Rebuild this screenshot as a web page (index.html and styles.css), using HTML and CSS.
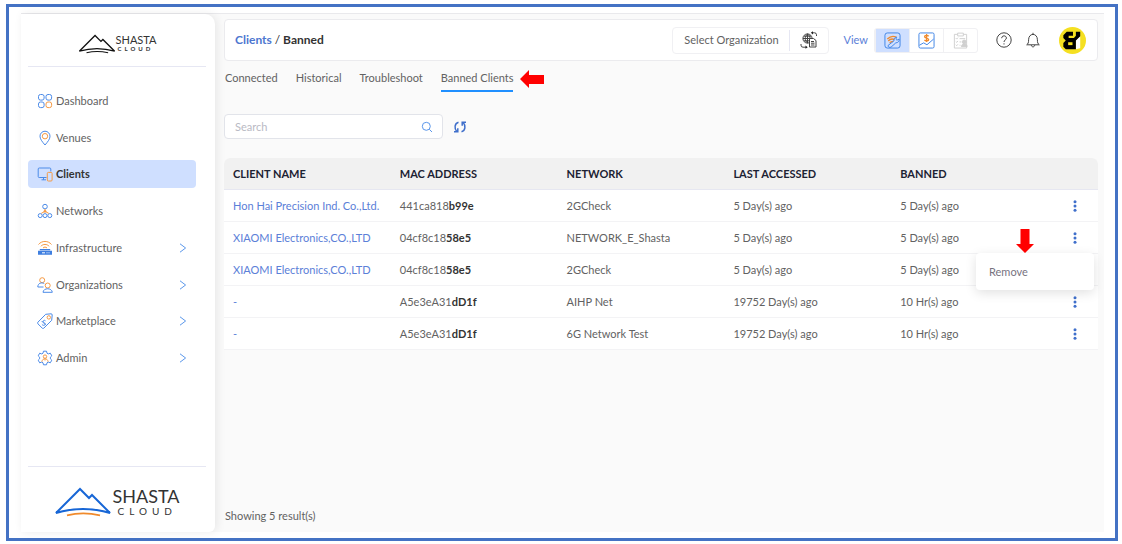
FILE: index.html
```html
<!DOCTYPE html>
<html lang="en">
<head>
<meta charset="utf-8">
<meta name="viewport" content="width=device-width, initial-scale=1">
<title>Clients / Banned – Shasta Cloud</title>
<link rel="stylesheet" href="styles.css">
</head>
<body>
<svg class="defs" aria-hidden="true">
  <symbol id="chevron" viewBox="0 0 8 10"><path d="M1 .8 6.6 5 1 9.2"/></symbol>
  <symbol id="dots" viewBox="0 0 4 12"><circle cx="2" cy="1.7" r="1.5"/><circle cx="2" cy="6" r="1.5"/><circle cx="2" cy="10.3" r="1.5"/></symbol>
</svg>
<div class="frame">
<div class="app">
  <aside class="sidebar">
    <a class="logo logo-small" href="#">
      <svg class="mountain" viewBox="0 0 58 30" aria-hidden="true"><path class="peak" d="M2 26 26 2l9 9 3-3 18 18Q29 18 2 26z"/><path class="arc" d="M13 28.300Q29 24.500 46 28.300"/></svg>
      <span class="logo-text"><span class="logo-name">SHASTA</span><span class="logo-sub">CLOUD</span></span>
    </a>
    <nav class="menu">
      <a class="item" href="#"><svg class="icon" viewBox="0 0 16 16" aria-hidden="true"><rect x="1.500" y="1.500" width="5.600" height="5.600" rx="2"/><rect x="9" y="1.500" width="5.600" height="5.600" rx="2"/><rect x="1.500" y="9" width="5.600" height="5.600" rx="2"/><rect class="o" x="9" y="9" width="5.600" height="5.600" rx="2"/></svg>Dashboard</a>
      <a class="item" href="#"><svg class="icon" viewBox="0 0 16 16" aria-hidden="true"><path d="M8 15C5 11.500 3 9 3 6.200a5 5 0 0 1 10 0C13 9 11 11.500 8 15z"/><circle class="o" cx="8" cy="6.200" r="2.700"/></svg>Venues</a>
      <a class="item current" href="#" aria-current="page"><svg class="icon" viewBox="0 0 16 16" aria-hidden="true"><path d="M9.500 11.500H2.200a1 1 0 0 1-1-1V3a1 1 0 0 1 1-1h10.600a1 1 0 0 1 1 1v2.500M6.500 11.500v2.300M4.500 13.800h4.500"/><rect class="o" x="10.300" y="6.400" width="4.800" height="8.600" rx="1"/></svg>Clients</a>
      <a class="item" href="#"><svg class="icon" viewBox="0 0 16 16" aria-hidden="true"><circle cx="8" cy="3.600" r="2.300"/><circle cx="3.200" cy="12.600" r="2"/><circle cx="8" cy="12.600" r="2"/><circle cx="12.800" cy="12.600" r="2"/><path class="o" d="M8 6v2.600M8 8.300 4.200 10.400M8 8.300l3.800 2.100"/><circle class="o" cx="8" cy="8.300" r="1"/></svg>Networks</a>
      <a class="item" href="#"><svg class="icon" viewBox="0 0 16 16" aria-hidden="true"><path class="o" d="M1.500 4.500C4.800.4 11.200.4 14.500 4.500M3.800 6.300c2.300-2.500 6.100-2.500 8.400 0M6 8c1.200-1.200 2.800-1.200 4 0"/><path class="fill" d="M2.800 9h10.400v1.200H2.800zM1 10.800h14v4H1z"/><path class="cut" d="M5 12.800h3M9.500 12.800h1M11.500 12.800h1"/></svg>Infrastructure<svg class="chevron" aria-hidden="true"><use href="#chevron"/></svg></a>
      <a class="item" href="#"><svg class="icon" viewBox="0 0 16 16" aria-hidden="true"><circle class="o" cx="5.200" cy="3.200" r="2.500"/><path d="M6.500 10H.8c0-4 4-5 6.500-3.300"/><circle class="o" cx="10.700" cy="8.500" r="2.500"/><path d="M6 15.300c.3-4.700 9-4.700 9.300 0z"/></svg>Organizations<svg class="chevron" aria-hidden="true"><use href="#chevron"/></svg></a>
      <a class="item" href="#"><svg class="icon" viewBox="0 0 16 16" aria-hidden="true"><path d="M.9 9.200 8.700 1.300 14 .8q1.200 0 1.200 1.200l-.5 5.300-7.900 7.900q-.8.600-1.500 0L.9 10.800q-.6-.8 0-1.600z"/><circle class="o" cx="11.800" cy="4.400" r="1.700"/><path d="M8.500 7.800C7 6.500 5.500 8 6.500 9.200s2.500 1 1.700 2.300-2.500 1-3.300-.2M4.700 8l4 4"/></svg>Marketplace<svg class="chevron" aria-hidden="true"><use href="#chevron"/></svg></a>
      <a class="item" href="#"><svg class="icon" viewBox="0 0 16 16" aria-hidden="true"><path d="M6.500 1.200h3l.5 2 1.300.7 2-.7 1.500 2.600L13.400 7.200v1.600l1.400 1.400-1.500 2.600-2-.7-1.300.7-.5 2h-3l-.5-2-1.300-.7-2 .7-1.500-2.600L2.600 8.800V7.200L1.200 5.800l1.500-2.600 2 .7L6 3.200z"/><circle class="o" cx="8" cy="6.600" r="1.700"/><path class="o" d="M5 11.700c.2-4 5.800-4 6 0M8 9v1.500"/></svg>Admin<svg class="chevron" aria-hidden="true"><use href="#chevron"/></svg></a>
    </nav>
    <div class="brand">
      <div class="logo logo-large">
        <svg class="mountain" viewBox="0 0 58 30" aria-hidden="true"><path class="peak" d="M2 26 26 2l9 9 3-3 18 18Q29 18 2 26z"/><path class="arc" d="M13 28.300Q29 24.500 46 28.300"/></svg>
        <span class="logo-text"><span class="logo-name">SHASTA</span><span class="logo-sub">CLOUD</span></span>
      </div>
    </div>
  </aside>
  <main class="main">
    <header class="topbar">
      <h1 class="crumbs"><a href="#">Clients</a> <span class="slash">/</span> Banned</h1>
      <div class="org">
        <button class="org-name" type="button">Select Organization</button>
        <button class="org-switch" type="button" aria-label="Switch organization"><svg viewBox="0 0 18 18" aria-hidden="true"><circle cx="7.500" cy="7.500" r="4.600"/><path d="M3 7.500h9M7.500 3v9M4 5.200h7M4 9.800h5M7.500 3C4.500 5 4.500 10 7.500 12M7.500 3c2 1.300 2.500 2.700 2.500 4"/><path class="doc" d="M9.500 7.500h4l2.500 2v6.500H9.500z"/><path d="M11 10.500h3M11 12.200h3.500M11 14h3.500M12 1.800h2.500a2 2 0 0 1 2 2V5M6 16.200H3a2 2 0 0 1-2-2V13"/><path class="tip" d="M13 .2v3.200L10.800 1.800zM5.500 14.500v3.300L7.700 16.200z"/></svg></button>
      </div>
      <span class="view-label">View</span>
      <div class="views">
        <button class="view on" type="button" aria-label="Network view" aria-pressed="true"><svg viewBox="0 0 18 18" aria-hidden="true"><rect x="1" y="1" width="16" height="16" rx="2.500"/><path class="o thick" d="M3.500 7.500C7 4 11 4.500 13 5.500M4.500 9.500c2-2.200 4.500-2.500 6.500-1.500M6 11.500c1-1.200 2-1.500 3.500-1.500"/><path d="m4.500 14 6-4.500c-.3-2.500 1-4 3-4L12.500 7.500l1.200 1.200L16 7.500c.3 2.300-1.200 4-3.500 4L7.500 16c-1.500 1-4-.5-3-2z"/></svg></button>
        <button class="view" type="button" aria-label="Billing view"><svg viewBox="0 0 18 18" aria-hidden="true"><rect x="1" y="1" width="16" height="16" rx="1.500"/><path d="m1.500 14 4.500-2.500 3.500 2 7-6"/><path class="o thick" d="M11.300 4.500C10 3 7 3.300 7 5s4.300 1.200 4.300 3-3 2-4.500.5M9.100 2.200v8.300"/></svg></button>
        <button class="view" type="button" aria-label="Audit view" disabled><svg viewBox="0 0 18 18" aria-hidden="true"><path d="M6 2.500H2.500V17H15.500V2.500H12M6 1.200h6v3H6zM4 6.500l1 1 1.300-1.500M8 7h6M4 10l1 1 1.300-1.500M8 10.500h2M4 13.500l1 1L6.300 13M8 14h1"/><circle class="grey" cx="13" cy="10.500" r="2"/><path class="grey" d="M10 15.500c0-4 6-4 6 0z"/></svg></button>
      </div>
      <button class="tool" type="button" aria-label="Help"><svg viewBox="0 0 16 16" aria-hidden="true"><circle cx="8" cy="8" r="7.200"/><path d="M5.700 6.200C5.700 3 10.400 3.200 10.400 6c0 1.900-2.400 2-2.400 4M8 11.300v1.200"/></svg></button>
      <button class="tool" type="button" aria-label="Notifications"><svg viewBox="0 0 16 16" aria-hidden="true"><path d="M8 .8v1.400M1.700 12.800h12.600c-1.500-1.200-1.900-2-1.900-5C12.400 4.500 10.500 2.400 8 2.400S3.600 4.500 3.600 7.800c0 3-.4 3.800-1.900 5zM6.300 13c.2 2.500 3.200 2.500 3.400 0"/></svg></button>
      <button class="avatar" type="button" aria-label="Account"><svg viewBox="0 0 28 28" aria-hidden="true"><circle cx="14" cy="14" r="14" fill="#f5e021"/><path fill="#fff" d="M17.500 13.500 22 9.500V22l-4.500 1z"/><path fill="#000" d="M8 5h6.500v4H10v2.500h5.500L17.500 9V5H22v4.500L17.500 14v9H7l-2.500-2.500v-4L7 14l-2.500-2.500V8.500z"/><path fill="#f5e021" d="M9.500 15.800h4.500v3H9.500z"/></svg></button>
    </header>

    <nav class="tabs" aria-label="Client lists">
      <a class="tab" href="#">Connected</a>
      <a class="tab" href="#">Historical</a>
      <a class="tab" href="#">Troubleshoot</a>
      <a class="tab active" href="#" aria-current="page">Banned Clients</a>
      <svg class="arrow-left" viewBox="0 0 24 18" aria-hidden="true"><path d="M0 9 9 0v5h15v9H9v4z"/></svg>
    </nav>

    <div class="tools">
      <label class="search">
        <input type="search" placeholder="Search" aria-label="Search">
        <svg viewBox="0 0 12 12" aria-hidden="true"><circle cx="5.300" cy="5.300" r="4"/><path d="m8.300 8.300 2.700 2.700"/></svg>
      </label>
      <button class="refresh" type="button" aria-label="Refresh"><svg viewBox="0 0 14 14" aria-hidden="true"><path d="M5.500 2.300C1.300 3.500 1.300 8.500 3.600 11.200M1 11.700h3.800V8.300M8.500 11.700c4.200-1.200 4.200-6.200 1.900-8.900M13 2.300H9.200v3.400"/></svg></button>
    </div>

    <table class="clients">
      <thead><tr><th scope="col">CLIENT NAME</th><th scope="col">MAC ADDRESS</th><th scope="col">NETWORK</th><th scope="col">LAST ACCESSED</th><th scope="col">BANNED</th><th class="act" aria-label="Actions"></th></tr></thead>
      <tbody>
        <tr><td><a href="#">Hon Hai Precision Ind. Co.,Ltd.</a></td><td>441ca818<b>b99e</b></td><td>2GCheck</td><td>5 Day(s) ago</td><td>5 Day(s) ago</td><td class="act"><button class="more" type="button" aria-label="Actions"><svg aria-hidden="true"><use href="#dots"/></svg></button></td></tr>
        <tr><td><a href="#">XIAOMI Electronics,CO.,LTD</a></td><td>04cf8c18<b>58e5</b></td><td>NETWORK_E_Shasta</td><td>5 Day(s) ago</td><td>5 Day(s) ago</td><td class="act"><button class="more" type="button" aria-label="Actions" aria-expanded="true"><svg aria-hidden="true"><use href="#dots"/></svg></button>
          <div class="popup"><svg class="arrow-down" viewBox="0 0 18 24" aria-hidden="true"><path d="M9 24 0 15h4.500V0h9v15H18z"/></svg><button type="button">Remove</button></div></td></tr>
        <tr><td><a href="#">XIAOMI Electronics,CO.,LTD</a></td><td>04cf8c18<b>58e5</b></td><td>2GCheck</td><td>5 Day(s) ago</td><td>5 Day(s) ago</td><td class="act"><button class="more" type="button" aria-label="Actions"><svg aria-hidden="true"><use href="#dots"/></svg></button></td></tr>
        <tr><td><a href="#">-</a></td><td>A5e3eA31<b>dD1f</b></td><td>AIHP Net</td><td>19752 Day(s) ago</td><td>10 Hr(s) ago</td><td class="act"><button class="more" type="button" aria-label="Actions"><svg aria-hidden="true"><use href="#dots"/></svg></button></td></tr>
        <tr><td><a href="#">-</a></td><td>A5e3eA31<b>dD1f</b></td><td>6G Network Test</td><td>19752 Day(s) ago</td><td>10 Hr(s) ago</td><td class="act"><button class="more" type="button" aria-label="Actions"><svg aria-hidden="true"><use href="#dots"/></svg></button></td></tr>
      </tbody>
    </table>
    <p class="count">Showing 5 result(s)</p>
  </main>
</div>
</div>
</body>
</html>
```
FILE: styles.css
```css
* { box-sizing: border-box; }

body {
  margin: 0;
  padding: 4px 4px 3px 6px;
  min-height: 100vh;
  display: flex;
  background: #fff;
  color: #626262;
  font: 11px/16px Lato, "Liberation Sans", sans-serif;
}

a { color: inherit; text-decoration: none; }

button {
  display: flex;
  align-items: center;
  justify-content: center;
  padding: 0;
  border: 0;
  background: none;
  color: inherit;
  font: inherit;
}

svg { display: block; flex: none; fill: none; }
.defs { position: absolute; width: 0; height: 0; }

.frame {
  flex: 1;
  display: flex;
  padding: 6px 11px 6px 12px;
  border: 3px solid #4472c4;
}

.app {
  flex: 1;
  display: flex;
  min-width: 0;
  border-top: 1px solid #e9e9ec;
  background: #fafafa;
}

/* Sidebar */
.sidebar {
  width: 194px;
  display: flex;
  flex-direction: column;
  padding: 0 9px 0 7px;
  border-radius: 0 10px 6px 0;
  background: #fff;
  box-shadow: 2px 0 10px rgba(0, 0, 0, .08);
}

.logo { display: flex; align-items: center; justify-content: center; color: #333; }
.logo-text { display: flex; flex-direction: column; }
.peak { stroke: #1766d6; stroke-width: 2; }
.arc { stroke: #f08a2c; stroke-width: 1.8; }

.logo-small { height: 53px; padding-top: 7px; border-bottom: 1px solid #e6e7f3; }
.logo-small .mountain { width: 38px; height: 20px; }
.logo-small .peak, .logo-small .arc { stroke: #111; }
.logo-small .logo-name { font-size: 11px; line-height: 11px; }
.logo-small .logo-sub { padding-left: 2px; font-size: 6px; font-weight: 700; line-height: 8px; letter-spacing: 3px; }

.brand { margin-top: auto; padding: 20px 0 15px; border-top: 1px solid #e6e7f3; }
.logo-large .mountain { width: 58px; height: 30px; }
.logo-large .logo-name { font-size: 18px; line-height: 18px; }
.logo-large .logo-sub { padding-left: 5px; font-size: 10px; line-height: 12px; letter-spacing: 5px; }

.menu {
  height: 285px;
  margin: 20px 10px 0 0;
  display: flex;
  flex-direction: column;
  justify-content: space-between;
}

.item {
  display: flex;
  align-items: center;
  gap: 3px;
  height: 28px;
  padding: 0 9px;
  border-radius: 4px;
}
.item.current { background: #cfdfff; color: #333; font-weight: 700; }

.icon { width: 16px; height: 16px; stroke: #4c8be8; }
.icon .o, .view .o { stroke: #f59a45; }
.icon .fill { fill: #3f7fe0; stroke: none; }
.icon .cut { stroke: #fff; }
.chevron { width: 8px; height: 10px; margin-left: auto; stroke: #5b97ea; }

/* Main column */
.main { flex: 1; min-width: 0; display: flex; flex-direction: column; padding: 5px 6px 8px 9px; }

.topbar {
  display: flex;
  align-items: center;
  height: 42px;
  padding: 0 10px;
  border: 1px solid #ebebee;
  border-radius: 4px;
  background: #fff;
}
.crumbs { margin: 0 auto 0 0; color: #333; font-size: 12px; font-weight: 700; }
.crumbs a { color: #4d76d0; }
.slash { font-weight: 400; }

.org { display: flex; height: 27px; border: 1px solid #f0f0f3; border-radius: 4px; padding: 2px 0; }
.org-name { padding: 0 10px 0 11px; border-right: 1px solid #e6e7f3; }
.org-switch { width: 38px; }
.org-switch svg { width: 18px; height: 18px; stroke: #444; }
.org-switch .doc { fill: #fff; }
.org-switch .tip { fill: #222; stroke: none; }

.view-label { margin: 0 6px 0 15px; color: #5b80d8; }
.views { display: flex; margin-right: 18px; border: 1px solid #f0f0f3; border-radius: 3px; }
.view { width: 34px; height: 23px; border-left: 1px solid #f0f0f3; }
.view svg { width: 17px; height: 17px; stroke: #3d83e6; }
.view .thick { stroke: #f08a2c; stroke-width: 1.400; }
.view.on { background: #cfdfff; }
.view:disabled svg { stroke: #cfcfcf; }
.view .grey { fill: #cfcfcf; }

.tool { width: 16px; height: 16px; margin-right: 13px; }
.tool svg { width: 16px; height: 16px; stroke: #444; }
.avatar { margin: 0 1px 0 5px; border-radius: 50%; }
.avatar svg { width: 27px; height: 27px; }

.tabs { display: flex; align-items: flex-start; gap: 18px; padding: 9px 0 0 1px; }
.tab { padding-bottom: 4px; border-bottom: 2px solid transparent; }
.tab.active { border-color: #1f8fff; }
.arrow-left { width: 24px; height: 18px; margin-left: -11px; fill: #f00; }

.tools { display: flex; align-items: center; gap: 10px; margin-top: 22px; }
.search {
  width: 219px;
  height: 25px;
  display: flex;
  align-items: center;
  padding: 0 9px 0 10px;
  border: 1px solid #e2e4ea;
  border-radius: 4px;
  background: #fff;
}
.search input { flex: 1; min-width: 0; padding: 0; border: 0; outline: 0; background: none; font: inherit; }
.search input::placeholder { color: #b9bac4; }
.search svg { width: 12px; height: 12px; stroke: #5b97ea; }
.refresh svg { width: 14px; height: 14px; stroke: #3f6fcb; stroke-width: 1.5; }

/* Table */
.clients { width: 100%; margin-top: 19px; border-spacing: 0; table-layout: fixed; background: #fff; border-radius: 6px 6px 0 0; }
.clients th, .clients td { height: 32px; padding: 0 0 0 9px; text-align: left; white-space: nowrap; }
.clients th { background: #f1f1f1; border-bottom: 1px solid #e6e7f1; color: #1c2233; font-weight: 700; }
.clients th:first-child { border-radius: 6px 0 0 0; }
.clients th:last-child { border-radius: 0 6px 0 0; }
.clients td { border-bottom: 1px solid #f3f3f5; }
.clients td a { color: #5b80d8; }
.clients b { color: #333; font-weight: 700; }
.clients .act { position: relative; width: 40px; padding-left: 15px; }
.more svg { width: 4px; height: 12px; fill: #3f6fcb; }

.popup {
  position: absolute;
  z-index: 1;
  top: 31px;
  right: 4px;
  width: 118px;
  border-radius: 4px;
  background: #fff;
  box-shadow: 0 3px 12px rgba(0, 0, 0, .12);
}
.popup button { width: 100%; height: 37px; padding-left: 13px; justify-content: flex-start; color: #77737f; }
.arrow-down { position: absolute; bottom: 100%; left: 40px; width: 18px; height: 24px; fill: #f00; }

.count { margin: auto 0 0 1px; }
```
